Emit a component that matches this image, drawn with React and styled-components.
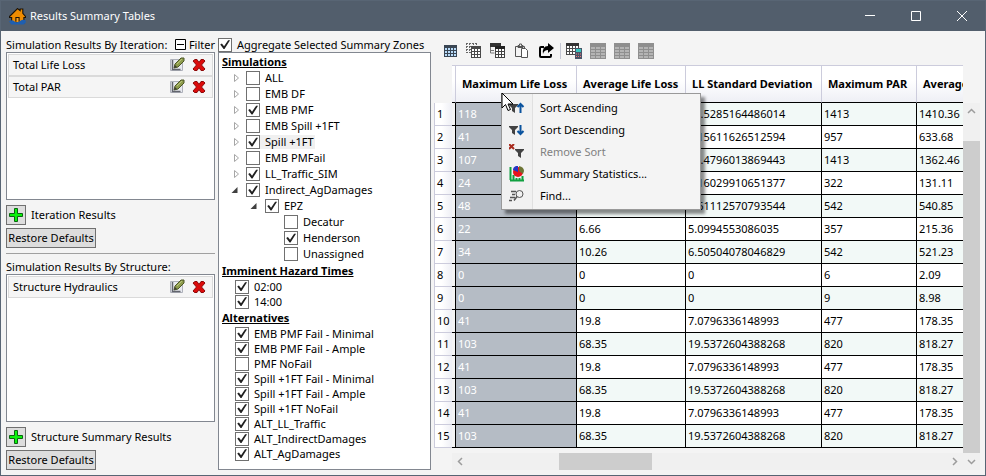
import React, { useState } from 'react'
import styled, { createGlobalStyle, css } from 'styled-components'

const GlobalStyle = createGlobalStyle`
  * {
    box-sizing: border-box;
  }

  body {
    margin: 0;
    background: #f4f4f4;
    color: #000;
    font-family: 'Noto Sans', 'Open Sans', sans-serif;
    font-size: 11px;
    line-height: 14px;
  }

  button, input {
    font: inherit;
    color: inherit;
    margin: 0;
    padding: 0;
  }
`

const Window = styled.div`
  display: flex;
  flex-direction: column;
  height: 100vh;
  border: 1px solid #586574;
  background: #f4f4f4;
  overflow: hidden;
`

const TitleBar = styled.header`
  display: flex;
  align-items: center;
  flex: none;
  height: 30px;
  padding-left: 8px;
  background: #525e6c;
  color: #fff;
`

const Title = styled.h1`
  flex: 1;
  margin: 0 0 0 4px;
  font-size: 11px;
  font-weight: 400;
`

const WindowButton = styled.button`
  display: flex;
  align-items: center;
  justify-content: center;
  width: 46px;
  height: 30px;
  border: none;
  background: transparent;
`

const Body = styled.main`
  display: grid;
  grid-template-columns: 209px 213px minmax(0, 1fr);
  gap: 3px;
  flex: 1;
  min-height: 0;
  padding: 6px 5px 5px;
`

const Column = styled.section`
  display: flex;
  flex-direction: column;
  min-width: 0;
  min-height: 0;
`

const ListHead = styled.div`
  display: flex;
  align-items: center;
  justify-content: space-between;
  flex: none;
  height: 15px;
  white-space: nowrap;
`

const FilterButton = styled.button`
  display: flex;
  align-items: center;
  gap: 3px;
  border: none;
  background: transparent;
`

const List = styled.ul`
  flex: 1;
  min-height: 0;
  margin: 0;
  padding: 1px;
  list-style: none;
  border: 1px solid #828790;
  background: #fff;
`

const ListItem = styled.li`
  display: flex;
  align-items: center;
  height: 22px;
  padding: 0 5px 0 4px;
  border: 1px solid #dadada;
  background: #f5f5f5;
`

const ItemName = styled.span`
  flex: 1;
`

const IconButton = styled.button`
  display: flex;
  align-items: center;
  justify-content: center;
  width: 16px;
  height: 16px;
  border: none;
  background: transparent;

  & + & {
    margin-left: 6px;
  }
`

const AddRow = styled.label`
  display: flex;
  align-items: center;
  gap: 5px;
  flex: none;
  margin: 5px 0 3px;
`

const AddButton = styled.button`
  display: flex;
  align-items: center;
  justify-content: center;
  width: 20px;
  height: 20px;
  border: 1px solid #707070;
  background: #ddd;
`

const RestoreButton = styled.button`
  flex: none;
  align-self: flex-start;
  width: 90px;
  height: 20px;
  border: 1px solid #707070;
  background: #ddd;
  white-space: nowrap;
`

const Divider = styled.hr`
  flex: none;
  width: 100%;
  height: 1px;
  margin: 5px 0;
  border: none;
  background: #a0a0a0;
`

const Check = styled.input`
  appearance: none;
  flex: none;
  width: 14px;
  height: 14px;
  border: 1px solid #707070;
  background: #fff;

  &:checked::before {
    content: '';
    display: block;
    width: 12px;
    height: 12px;
    background: #212121;
    clip-path: polygon(10% 50%, 24% 42%, 42% 64%, 76% 14%, 92% 14%, 46% 88%, 38% 88%);
  }
`

const CheckLabel = styled.label`
  display: flex;
  align-items: center;
  gap: 5px;
  padding-right: 1px;
  white-space: nowrap;
  background: ${props => (props.$active ? '#f0f0f0' : 'transparent')};
`

const TreeBox = styled.div`
  flex: 1;
  min-height: 0;
  overflow: hidden;
  border: 1px solid #828790;
  background: #fff;
`

const GroupTitle = styled.h2`
  height: 17px;
  margin: 0;
  padding-left: 3px;
  font-size: 11px;
  line-height: 17px;
  font-weight: 700;
  text-decoration: underline;
`

const TreeRow = styled.div`
  display: flex;
  align-items: center;
  height: 16px;
  padding-left: ${props => 12 + props.$level * 19}px;
`

const OptionRow = styled.div`
  display: flex;
  align-items: center;
  height: 15px;
  padding-left: 16px;
`

const Expander = styled.button`
  display: flex;
  align-items: center;
  width: 15px;
  height: 14px;
  border: none;
  background: transparent;
`

const Toolbar = styled.div`
  display: flex;
  align-items: center;
  gap: 8px;
  flex: none;
  height: 28px;
  padding-left: 8px;
`

const ToolSeparator = styled.span`
  width: 1px;
  height: 16px;
  margin: 0 -3px 0 -2px;
  background: #c4c7d4;
`

const ToolButton = styled.button`
  display: flex;
  width: 16px;
  height: 16px;
  border: none;
  background: transparent;
`

const Grid = styled.div`
  position: relative;
  display: grid;
  grid-template-columns: minmax(0, 1fr) 17px;
  grid-template-rows: minmax(0, 1fr) 17px;
  flex: 1;
  min-height: 0;
`

const TableArea = styled.div`
  overflow: hidden;
`

const Table = styled.table`
  table-layout: fixed;
  width: 577px;
  border-collapse: separate;
  border-spacing: 0;
`

const ColumnHead = styled.th`
  height: 38px;
  padding: 0 0 0 6px;
  border-top: 1px solid #ccccdc;
  border-right: 1px solid #ccccdc;
  border-bottom: 1px solid #000;
  background: linear-gradient(#fff, #fff 40%, #eeeff5);
  font-weight: 700;
  text-align: left;
  white-space: nowrap;
`

const SpacerHead = styled(ColumnHead)`
  padding: 0;
`

const CornerHead = styled.th`
  padding: 0;
`

const RowHead = styled.th`
  height: 23px;
  padding: 0 0 0 2px;
  border-left: 1px solid #ccccdc;
  border-bottom: 1px solid #ccccdc;
  background: linear-gradient(to right, #fff 40%, #eeeff5);
  font-weight: 400;
  text-align: left;
`

const Cell = styled.td`
  height: 23px;
  padding: 0 0 0 2px;
  border-right: 1px solid #000;
  border-bottom: 1px solid #000;
  background: ${props => (props.$odd ? '#f2f9f7' : '#fff')};
  white-space: nowrap;

  ${props => props.$selected && css`
    background: #b5bcc5;
    color: #fff;
  `}
`

const SpacerCell = styled.td`
  padding: 0;
  border-right: 1px solid #000;
  border-bottom: 1px solid #000;
`

const ScrollBar = styled.div`
  display: flex;
  flex-direction: ${props => (props.$vertical ? 'column' : 'row')};
  grid-column: ${props => (props.$vertical ? '2' : '1')};
  grid-row: ${props => (props.$vertical ? '1 / 3' : '2')};
  margin: ${props => (props.$vertical ? '38px 0 0' : '0 0 0 18px')};
  background: #f0f0f0;
`

const ScrollButton = styled.button`
  display: flex;
  align-items: center;
  justify-content: center;
  flex: none;
  width: 17px;
  height: 17px;
  border: none;
  background: transparent;
`

const ScrollSpace = styled.div`
  flex: ${props => props.$part} 0 0;
`

const ScrollThumb = styled(ScrollSpace)`
  background: #cdcdcd;
`

const Menu = styled.div`
  position: absolute;
  left: 67px;
  top: 28px;
  width: 200px;
  padding: 3px 0 2px;
  border: 1px solid #999;
  background: linear-gradient(to right, #f1f1f1 30px, #e0e0e0 30px, #e0e0e0 31px, #f4f4f4 31px);
  box-shadow: 4px 4px 3px rgba(0, 0, 0, 0.45);
`

const MenuItem = styled.button`
  display: flex;
  align-items: center;
  gap: 15px;
  width: 100%;
  height: 22px;
  padding-left: 7px;
  border: none;
  background: transparent;
  text-align: left;

  &:disabled {
    color: #808080;
  }
`

const Pointer = styled.svg`
  position: absolute;
  left: 67px;
  top: 27px;
  pointer-events: none;
`

const HouseIcon = () => (
  <svg width="17" height="17" viewBox="0 0 16 16">
    <path d="M.5 8 8 .5l2.500 2V1H13v4l2.500 3v1H14v5H2.500V9H.5z" fill="#f08c00" stroke="#1a1208" />
    <path d="M6.500 13V9h3v4" fill="#f8a020" stroke="#1a1208" />
    <path d="M0 12.500q3-2 5 0t5 0 5.500-1l.5 2-2 2H2z" fill="#1f5fb0" />
  </svg>
)

const EditIcon = () => (
  <svg width="16" height="16" viewBox="0 0 16 16">
    <path d="M1.500 2.500h12v11h-12z" fill="#e8eaf0" stroke="#aeb1ba" />
    <path d="M3.500 3v9.500h8" fill="none" stroke="#62656e" strokeWidth="1.500" />
    <path d="m5 11 1-4 6-6 3 0v3L9 10z" fill="#8d9c4c" stroke="#4c5626" />
    <path d="m5 11 1-3 2 2z" fill="#3c3c34" />
    <path d="m8 7 5-5" stroke="#b8c47c" />
  </svg>
)

const DeleteIcon = () => (
  <svg width="14" height="14" viewBox="0 0 14 14">
    <path
      d="M1 3 3 1.500h2l2 3 2-3h2.500L13 3 9.500 7l3.500 4-1.500 1.500H9l-2-3-2 3H2.500L1 11l3.500-4z"
      fill="#dc0c0c"
      stroke="#8c0808"
    />
  </svg>
)

const PlusIcon = () => (
  <svg width="16" height="16" viewBox="0 0 16 16">
    <path d="M6.500 1.500h3v5h5v3h-5v5h-3v-5h-5v-3h5z" fill="#0cf20c" stroke="#0a6410" />
  </svg>
)

const MinusBoxIcon = () => (
  <svg width="11" height="11" viewBox="0 0 11 11">
    <path d="M.5.5h10v10H.5zM2 5.500h7" fill="#fff" stroke="#000" />
  </svg>
)

// each cell is 2px with a 1px rule between
const TableGlyph = ({ x = 0, y = 0, cols = 4, rows = 3, line, fill = '#fff' }) => (
  <g>
    <rect x={x} y={y} width={cols * 3 + 1} height={rows * 3 + 3} fill={line} />
    {Array.from({ length: cols * rows }, (_, i) => (
      <rect
        key={i}
        x={x + 1 + (i % cols) * 3}
        y={y + 3 + Math.floor(i / cols) * 3}
        width="2"
        height="2"
        fill={fill}
      />
    ))}
  </g>
)

const TableIcon = () => (
  <svg width="16" height="16" viewBox="0 0 16 16">
    <TableGlyph x={2} y={2} line="#3a4654" fill="#b9dcfa" />
  </svg>
)

const CopyCellsIcon = () => (
  <svg width="16" height="16" viewBox="0 0 16 16">
    <path d="M0 .5h11M0 3.500h11M0 6.500h5M0 9.500h5M.5 0v10M3.500 0v10M7.500 0v5M10.500 0v5" stroke="#666" strokeDasharray="2 1" />
    <TableGlyph x={5} y={3} cols={3} line="#4a4a4a" />
  </svg>
)

const CopyHeadersIcon = () => (
  <svg width="16" height="16" viewBox="0 0 16 16">
    <path d="M.5 4v6h4M0 7.500h4" fill="none" stroke="#777" />
    <path d="M0 0h11v4H0z" fill="#333" />
    <TableGlyph x={5} y={3} cols={3} line="#444" />
    <path d="M5 3h10v3H5z" fill="#222" />
  </svg>
)

const PasteIcon = () => (
  <svg width="16" height="16" viewBox="0 0 16 16">
    <path d="M7 13.500H1.500v-10h9V6M4 4.500V2.500h1.500V1h2v1.500H9v2z" fill="none" stroke="#555" />
    <path d="M7.500 5.500h4l2 2v7h-6z" fill="#fff" stroke="#555" />
  </svg>
)

const ShareIcon = () => (
  <svg width="16" height="16" viewBox="0 0 16 16">
    <path d="M6 4H3Q2 4 2 5v8q0 1 1 1h9q1 0 1-1v-2" fill="none" stroke="#000" strokeWidth="2" />
    <path d="M10 0l6 5-6 5V7Q6 7 5 11 4 3 10 3z" fill="#000" />
  </svg>
)

const CalcTableIcon = () => (
  <svg width="16" height="16" viewBox="0 0 16 16">
    <TableGlyph x={0} y={0} line="#4a4a4a" />
    <path d="M0 0h13v3H0z" fill="#333" />
    <rect x="9" y="5" width="7" height="11" fill="#4a5568" />
    <rect x="10" y="6" width="5" height="3" fill="#38c8c0" />
    <path d="M10 11h1m1 0h1m1 0h1M10 13.500h1m1 0h1m1 0h1" stroke="#f0787c" />
  </svg>
)

const GrayTableIcon = () => (
  <svg width="16" height="16" viewBox="0 0 16 16">
    <path d="M0 0h16v16H0z" fill="#8f8f8f" />
    <path d="M1 5h14M1 8h14M1 11h14M1 14h14" stroke="#b4b4b4" strokeWidth="2" strokeDasharray="4 1" />
  </svg>
)

const Funnel = ({ x = 0, y = 0 }) => (
  <path d={`M${x} ${y}h9v1l-3 3v5l-3-2v-3l-3-3z`} fill="#424242" />
)

const SortAscIcon = () => (
  <svg width="16" height="16" viewBox="0 0 16 16">
    <Funnel y={4} />
    <path d="M11.500 13V4M8.500 7l3-3 3 3" fill="none" stroke="#0a539e" strokeWidth="2" />
  </svg>
)

const SortDescIcon = () => (
  <svg width="16" height="16" viewBox="0 0 16 16">
    <Funnel y={4} />
    <path d="M11.500 3v9M8.500 9l3 3 3-3" fill="none" stroke="#0a539e" strokeWidth="2" />
  </svg>
)

const RemoveSortIcon = () => (
  <svg width="16" height="16" viewBox="0 0 16 16">
    <path d="m0 0 5 5M5 0 0 5" stroke="#a82a1c" strokeWidth="2" />
    <Funnel x={6} y={5} />
  </svg>
)

const StatsIcon = () => (
  <svg width="16" height="16" viewBox="0 0 16 16">
    <path d="M1.500 1v13M4.500 9v5M7.500 12v2M10.500 12v2M13.500 10v4M1 14.500h14" stroke="#10a040" strokeWidth="2" />
    <circle cx="9" cy="6" r="5" fill="#e8141c" />
    <path d="M9 6V0H7Q4 1 4 4z" fill="#2434c4" />
    <path d="M10 5V0q5 1 5 5l-1 3z" fill="#6c7434" />
  </svg>
)

const FindIcon = () => (
  <svg width="16" height="16" viewBox="0 0 16 16">
    <circle cx="10.500" cy="6" r="3.500" fill="none" stroke="#555" />
    <path d="m8 8.500-3 4M2 3.500h5M3 6.500h3M1 9.500h5M0 12.500h3" stroke="#555" strokeWidth="1.500" />
  </svg>
)

const ExpanderIcon = ({ open }) => (
  <svg width="10" height="10" viewBox="0 0 10 10">
    {open
      ? <path d="M6.500 2v6H.5z" fill="#404040" />
      : <path d="M3.500 1.500v7l4-3.500z" fill="#fff" stroke="#a6a6a6" />}
  </svg>
)

const arrows = {
  up: 'm1 6 3.500-3.500L8 6',
  down: 'm1 3 3.500 3.500L8 3',
  left: 'M6 1 2.500 4.500 6 8',
  right: 'm3 1 3.500 3.500L3 8'
}

const Arrow = ({ to }) => (
  <svg width="9" height="9" viewBox="0 0 9 9">
    <path d={arrows[to]} fill="none" stroke="#9c9c9c" strokeWidth="1.500" />
  </svg>
)

const simulations = [
  { name: 'ALL', level: 0, open: false },
  { name: 'EMB DF', level: 0, open: false },
  { name: 'EMB PMF', level: 0, open: false, checked: true },
  { name: 'EMB Spill +1FT', level: 0, open: false },
  { name: 'Spill +1FT', level: 0, open: false, checked: true, active: true },
  { name: 'EMB PMFail', level: 0, open: false },
  { name: 'LL_Traffic_SIM', level: 0, open: false, checked: true },
  { name: 'Indirect_AgDamages', level: 0, open: true, checked: true },
  { name: 'EPZ', level: 1, open: true, checked: true },
  { name: 'Decatur', level: 2, leaf: true },
  { name: 'Henderson', level: 2, leaf: true, checked: true },
  { name: 'Unassigned', level: 2, leaf: true }
]

const hazardTimes = [
  { name: '02:00', checked: true },
  { name: '14:00', checked: true }
]

const alternatives = [
  { name: 'EMB PMF Fail - Minimal', checked: true },
  { name: 'EMB PMF Fail - Ample', checked: true },
  { name: 'PMF NoFail' },
  { name: 'Spill +1FT Fail - Minimal', checked: true },
  { name: 'Spill +1FT Fail - Ample', checked: true },
  { name: 'Spill +1FT NoFail', checked: true },
  { name: 'ALT_LL_Traffic', checked: true },
  { name: 'ALT_IndirectDamages', checked: true },
  { name: 'ALT_AgDamages', checked: true }
]

const columns = [
  { name: 'Maximum Life Loss', width: 121 },
  { name: 'Average Life Loss', width: 109 },
  { name: 'LL Standard Deviation', width: 136 },
  { name: 'Maximum PAR', width: 95 },
  { name: 'Average PAR', width: 94 }
]

const rows = [
  ['118', '98.52', '17.5285164486014', '1413', '1410.36'],
  ['41', '20.4', '7.15611626512594', '957', '633.68'],
  ['107', '82.16', '15.4796013869443', '1413', '1362.46'],
  ['24', '8.4', '5.16029910651377', '322', '131.11'],
  ['48', '26.9', '5.61112570793544', '542', '540.85'],
  ['22', '6.66', '5.0994553086035', '357', '215.36'],
  ['34', '10.26', '6.50504078046829', '542', '521.23'],
  ['0', '0', '0', '6', '2.09'],
  ['0', '0', '0', '9', '8.98'],
  ['41', '19.8', '7.0796336148993', '477', '178.35'],
  ['103', '68.35', '19.5372604388268', '820', '818.27'],
  ['41', '19.8', '7.0796336148993', '477', '178.35'],
  ['103', '68.35', '19.5372604388268', '820', '818.27'],
  ['41', '19.8', '7.0796336148993', '477', '178.35'],
  ['103', '68.35', '19.5372604388268', '820', '818.27']
]

const tools = [
  { name: 'Select all', icon: TableIcon },
  { name: 'Copy', icon: CopyCellsIcon },
  { name: 'Copy with headers', icon: CopyHeadersIcon },
  { name: 'Paste', icon: PasteIcon },
  { name: 'Export', icon: ShareIcon }
]

const tableTools = [
  { name: 'Calculate field', icon: CalcTableIcon },
  { name: 'Add row', icon: GrayTableIcon },
  { name: 'Insert row', icon: GrayTableIcon },
  { name: 'Delete row', icon: GrayTableIcon }
]

const menuItems = [
  { name: 'Sort Ascending', icon: SortAscIcon },
  { name: 'Sort Descending', icon: SortDescIcon },
  { name: 'Remove Sort', icon: RemoveSortIcon, disabled: true },
  { name: 'Summary Statistics...', icon: StatsIcon },
  { name: 'Find...', icon: FindIcon }
]

const CheckOption = ({ name, checked, active }) => {
  const [on, setOn] = useState(Boolean(checked))
  return (
    <CheckLabel $active={active}>
      <Check type="checkbox" checked={on} onChange={e => setOn(e.target.checked)} />
      {name}
    </CheckLabel>
  )
}

const ResultList = ({ title, items, addLabel, filter }) => (
  <>
    <ListHead>
      <span>{title}</span>
      {filter && <FilterButton type="button"><MinusBoxIcon />Filter</FilterButton>}
    </ListHead>
    <List>
      {items.map(item => (
        <ListItem key={item}>
          <ItemName>{item}</ItemName>
          <IconButton type="button" aria-label={`Edit ${item}`}><EditIcon /></IconButton>
          <IconButton type="button" aria-label={`Delete ${item}`}><DeleteIcon /></IconButton>
        </ListItem>
      ))}
    </List>
    <AddRow>
      <AddButton type="button"><PlusIcon /></AddButton>
      {addLabel}
    </AddRow>
    <RestoreButton type="button">Restore Defaults</RestoreButton>
  </>
)

const ToolItem = ({ name, icon: Icon }) => (
  <ToolButton type="button" aria-label={name}><Icon /></ToolButton>
)

const ResultsTable = () => (
  <Table>
    <colgroup>
      <col style={{ width: 18 }} />
      <col style={{ width: 4 }} />
      {columns.map(col => <col key={col.name} style={{ width: col.width }} />)}
    </colgroup>
    <thead>
      <tr>
        <CornerHead />
        <SpacerHead />
        {columns.map(col => <ColumnHead key={col.name} scope="col">{col.name}</ColumnHead>)}
      </tr>
    </thead>
    <tbody>
      {rows.map((row, i) => (
        <tr key={i}>
          <RowHead scope="row">{i + 1}</RowHead>
          <SpacerCell />
          {row.map((value, c) => (
            <Cell key={c} $odd={i % 2 === 0} $selected={c === 0}>{value}</Cell>
          ))}
        </tr>
      ))}
    </tbody>
  </Table>
)

const App = () => (
  <Window>
    <GlobalStyle />
    <TitleBar>
      <HouseIcon />
      <Title>Results Summary Tables</Title>
      <WindowButton type="button" aria-label="Minimize">
        <svg width="10" height="10"><path d="M0 4.500h10" stroke="#fff" /></svg>
      </WindowButton>
      <WindowButton type="button" aria-label="Maximize">
        <svg width="10" height="10"><path d="M.5.5h9v9h-9z" fill="none" stroke="#fff" /></svg>
      </WindowButton>
      <WindowButton type="button" aria-label="Close">
        <svg width="10" height="10"><path d="m0 0 10 10M10 0 0 10" stroke="#fff" /></svg>
      </WindowButton>
    </TitleBar>
    <Body>
      <Column>
        <ResultList
          title="Simulation Results By Iteration:"
          items={['Total Life Loss', 'Total PAR']}
          addLabel="Iteration Results"
          filter
        />
        <Divider />
        <ResultList
          title="Simulation Results By Structure:"
          items={['Structure Hydraulics']}
          addLabel="Structure Summary Results"
        />
      </Column>
      <Column>
        <ListHead>
          <CheckOption name="Aggregate Selected Summary Zones" checked />
        </ListHead>
        <TreeBox>
          <GroupTitle>Simulations</GroupTitle>
          {simulations.map(({ level, open, leaf, ...option }) => (
            <TreeRow key={option.name} $level={level}>
              <Expander type="button" aria-label={option.name} disabled={leaf}>
                {!leaf && <ExpanderIcon open={open} />}
              </Expander>
              <CheckOption {...option} />
            </TreeRow>
          ))}
          <GroupTitle>Imminent Hazard Times</GroupTitle>
          {hazardTimes.map(option => <OptionRow key={option.name}><CheckOption {...option} /></OptionRow>)}
          <GroupTitle>Alternatives</GroupTitle>
          {alternatives.map(option => <OptionRow key={option.name}><CheckOption {...option} /></OptionRow>)}
        </TreeBox>
      </Column>
      <Column>
        <Toolbar>
          {tools.map(tool => <ToolItem key={tool.name} {...tool} />)}
          <ToolSeparator />
          {tableTools.map(tool => <ToolItem key={tool.name} {...tool} />)}
        </Toolbar>
        <Grid>
          <TableArea>
            <ResultsTable />
          </TableArea>
          <ScrollBar $vertical>
            <ScrollButton type="button" aria-label="Scroll up"><Arrow to="up" /></ScrollButton>
            <ScrollSpace $part={21} />
            <ScrollThumb $part={312} />
            <ScrollButton type="button" aria-label="Scroll down"><Arrow to="down" /></ScrollButton>
          </ScrollBar>
          <ScrollBar>
            <ScrollButton type="button" aria-label="Scroll left"><Arrow to="left" /></ScrollButton>
            <ScrollSpace $part={90} />
            <ScrollThumb $part={93} />
            <ScrollSpace $part={294} />
            <ScrollButton type="button" aria-label="Scroll right"><Arrow to="right" /></ScrollButton>
          </ScrollBar>
          <Menu role="menu">
            {menuItems.map(({ name, icon: Icon, disabled }) => (
              <MenuItem key={name} type="button" role="menuitem" disabled={disabled}>
                <Icon />
                {name}
              </MenuItem>
            ))}
          </Menu>
          <Pointer width="13" height="20" viewBox="0 0 13 20">
            <path d="M1 1v15l3.500-3.500 2.500 6 2.500-1-2.500-5.500h5z" fill="#fff" stroke="#000" />
          </Pointer>
        </Grid>
      </Column>
    </Body>
  </Window>
)

export default App
